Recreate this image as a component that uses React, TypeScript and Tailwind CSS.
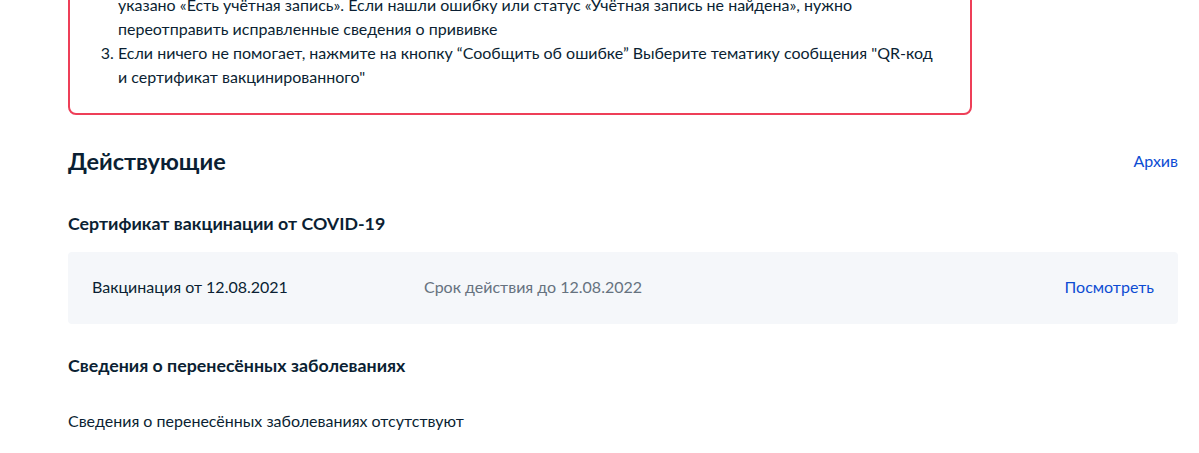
export default function App() {
  return (
    <div className="min-h-screen bg-white font-['Lato',sans-serif] text-[#0b1f33] overflow-hidden">
      <div className="pl-[68px] pr-[21px] pb-10">
        {/* Warning box, scrolled so only its lower part is visible */}
        <div className="-mt-[57px] w-[904px] rounded-lg border-2 border-[#ee3f58] px-6 pt-6 pb-6">
          <ol start={2} className="list-decimal pl-6 text-base leading-6">
            <li>
              Проверьте статус учётной записи в разделе «Профиль». Должно быть
              <br />
              указано «Есть учётная запись». Если нашли ошибку или статус «Учётная запись не найдена», нужно
              <br />
              переотправить исправленные сведения о прививке
            </li>
            <li>
              Если ничего не помогает, нажмите на кнопку “Сообщить об ошибке” Выберите тематику сообщения "QR-код
              <br />
              и сертификат вакцинированного"
            </li>
          </ol>
        </div>

        <div className="mt-[30px] flex items-center justify-between">
          <h2 className="text-[23.5px] leading-8 font-bold">Действующие</h2>
          <a className="text-base leading-6 text-[#0d4cd3]" href="#">
            Архив
          </a>
        </div>

        <h3 className="mt-[32px] text-[17.8px] leading-7 font-bold">Сертификат вакцинации от COVID-19</h3>

        <div className="mt-[15px] flex h-[72px] items-center rounded bg-[#f5f7fa] px-6 pb-[2px] text-base">
          <div className="w-[332px]">Вакцинация от 12.08.2021</div>
          <div className="flex-1 text-[#66727f]">Срок действия до 12.08.2022</div>
          <a className="text-[#0d4cd3]" href="#">
            Посмотреть
          </a>
        </div>

        <h3 className="mt-[27px] text-[17.8px] leading-7 font-bold">Сведения о перенесённых заболеваниях</h3>

        <p className="mt-[30px] text-base leading-6">Сведения о перенесённых заболеваниях отсутствуют</p>
      </div>
    </div>
  );
}
